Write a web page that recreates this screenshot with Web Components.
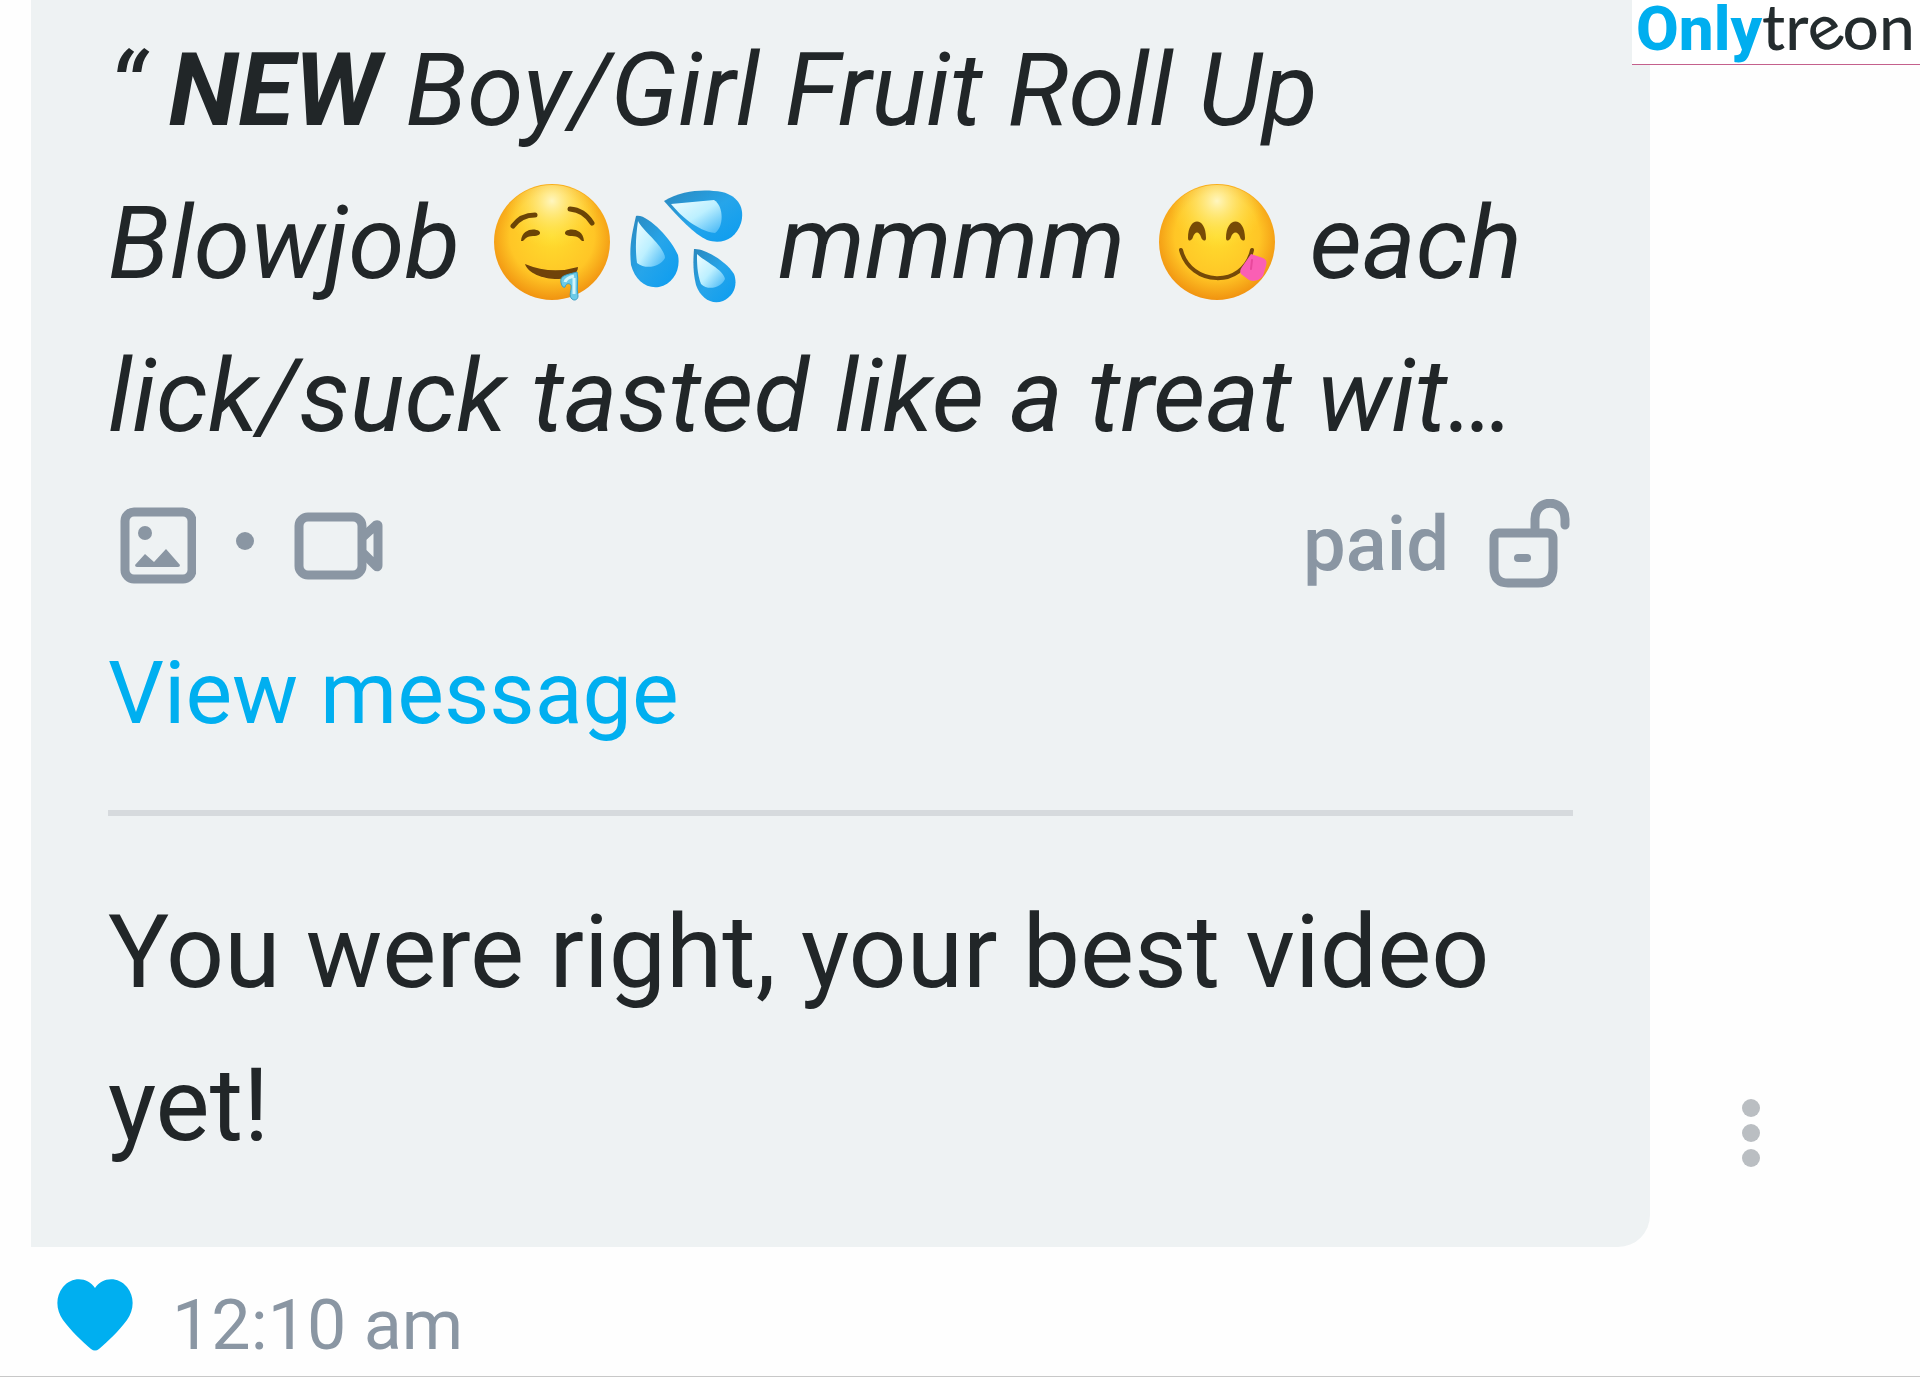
<!DOCTYPE html>
<html lang="en">
<head>
<meta charset="utf-8">
<title>Messages</title>
<style>
    body {
        margin: 0;
        background: #fefefe;
        color: #212628;
        font-family: Roboto, sans-serif;
    }
</style>
</head>
<body>
<chat-page>
    <brand-logo slot="brand"></brand-logo>
    <chat-message time="12:10 am">
        <quoted-post slot="quote" status="paid">“ <b>NEW</b> Boy/Girl Fruit Roll Up<br>
            Blowjob <emoji-icon name="drooling"></emoji-icon><emoji-icon name="drops"></emoji-icon> mmmm <emoji-icon name="yum"></emoji-icon> each<br>
            lick/suck tasted like a treat wit…</quoted-post>
        You were right, your best video yet!
    </chat-message>
</chat-page>

<script>
const EMOJI = {
    drooling: {
        label: 'drooling face',
        svg: `
            <circle cx="58" cy="58" r="58" fill="url(#face)"/>
            <circle cx="58" cy="58" r="57" fill="url(#shine)"/>
            <g fill="none" stroke="#6b4406" stroke-width="5" stroke-linecap="round">
                <path d="M19 42Q27 31 41 31"/>
                <path d="M76 25Q90 26 98 39"/>
            </g>
            <path d="M27 57C28 45 40 44 45 47C48 50 44 52 39 52C33 52 31 55 29 57Z" fill="#6b4406"/>
            <path d="M90 57C89 45 77 44 72 47C69 50 73 52 78 52C84 52 86 55 88 57Z" fill="#6b4406"/>
            <path d="M31 80Q57 91 84 83C84 90 76 95 64 95C48 95 34 89 31 80Z" fill="#70430a"/>
            <path d="M83 88C76 90 68 91 67 95C66 99 69 105 71 103C72 99 75 99 77 101C78 106 74 112 78 115C80 117 84 116 84 112C82 104 85 96 83 88Z" fill="#6ccbe8" stroke="#3a9fc5" stroke-width="1"/>
            <path d="M80 92Q72 94 71 98M80 94V110" fill="none" stroke="#d3f5fa" stroke-width="3"/>`
    },
    drops: {
        label: 'sweat droplets',
        svg: `
            <path d="M36 17C55 6 76 5 94 8C111 12 117 25 113 39C108 55 94 61 79 56C66 50 50 33 36 17Z" fill="url(#drop)"/>
            <path d="M8 32C4 50 1 62 3 81C7 96 18 105 31 103C45 100 53 86 50 71C44 56 19 29 8 32Z" fill="url(#drop)"/>
            <path d="M66 65C65 78 65 89 68 101C73 115 84 121 95 117C106 112 110 101 106 90C98 77 76 64 66 65Z" fill="url(#drop)"/>
            <path d="M43 20L86 16C96 22 96 43 87 49C69 47 52 31 43 20Z" fill="url(#glint)"/>
            <path d="M10 37C14 46 37 63 37 74C32 83 18 86 9 79C7 65 8 51 10 37Z" fill="url(#glint)"/>
            <path d="M69 70C76 77 96 86 97 95C93 104 80 107 73 100C69 89 69 79 69 70Z" fill="url(#glint)"/>`
    },
    yum: {
        label: 'face savoring food',
        svg: `
            <circle cx="58" cy="58" r="58" fill="url(#face)"/>
            <circle cx="58" cy="58" r="57" fill="url(#shine)"/>
            <path d="M29 54C29 32 47 32 47 54C47 58 43 57 42 53C40 47 36 47 34 53C33 57 29 58 29 54Z" fill="#774b06"/>
            <path d="M67 54C67 32 86 32 86 54C86 58 82 57 81 53C79 47 74 47 72 53C71 57 67 58 67 54Z" fill="#774b06"/>
            <path d="M22 66C31 102 84 105 93 66" fill="none" stroke="#754908" stroke-width="4" stroke-linecap="round"/>
            <path d="M92 70L104 74Q109 76 107 82L104 92Q98 99 90 96L82 90Q80 87 83 83Z" fill="#fa5fb4"/>
            <path d="M93 76L92 85" stroke="#e8489c" stroke-width="2" stroke-linecap="round"/>`
    }
};

class EmojiIcon extends HTMLElement {
    constructor() {
        super();
        this.attachShadow({ mode: 'open' });
    }

    connectedCallback() {
        const emoji = EMOJI[this.getAttribute('name')];
        this.shadowRoot.innerHTML = `
            <style>
                :host {
                    display: inline-block;
                    width: 116px;
                    height: 116px;
                    margin: 0 9px;
                    vertical-align: -22px;
                    line-height: 0;
                }
                svg {
                    width: 100%;
                    height: 100%;
                    overflow: visible;
                }
            </style>
            <svg viewBox="0 0 116 116" role="img" aria-label="${emoji.label}">
                <defs>
                    <radialGradient id="face" cx=".5" cy=".45" r=".56">
                        <stop offset="0" stop-color="#ffdc2e"/>
                        <stop offset=".65" stop-color="#ffc626"/>
                        <stop offset="1" stop-color="#f0900f"/>
                    </radialGradient>
                    <radialGradient id="shine" cx=".5" cy=".14" r=".42">
                        <stop offset="0" stop-color="#fffbd0" stop-opacity=".9"/>
                        <stop offset="1" stop-color="#ffe93c" stop-opacity="0"/>
                    </radialGradient>
                    <linearGradient id="drop" x1="0" y1="0" x2="1" y2="1">
                        <stop offset="0" stop-color="#2b88bd"/>
                        <stop offset=".5" stop-color="#26a5ea"/>
                        <stop offset="1" stop-color="#0b9cf0"/>
                    </linearGradient>
                    <linearGradient id="glint" x1="0" y1="0" x2="1" y2="1">
                        <stop offset="0" stop-color="#effdff"/>
                        <stop offset=".5" stop-color="#bdf0ff"/>
                        <stop offset="1" stop-color="#3fb4f5"/>
                    </linearGradient>
                </defs>
                ${emoji.svg}
            </svg>
        `;
    }
}

class BrandLogo extends HTMLElement {
    constructor() {
        super();
        this.attachShadow({ mode: 'open' });
    }

    connectedCallback() {
        this.shadowRoot.innerHTML = `
            <style>
                :host {
                    display: block;
                    box-sizing: border-box;
                    width: 288px;
                    height: 65px;
                    padding-left: 4px;
                    background: #fff;
                    border-bottom: 1px solid #c4608c;
                }
                a {
                    display: flex;
                    align-items: baseline;
                    color: #242c2e;
                    font: 500 64px/52px Lato, sans-serif;
                    text-decoration: none;
                    white-space: nowrap;
                }
                .only {
                    color: #00aeef;
                    font: 800 62px/52px Roboto, sans-serif;
                }
                .tilt {
                    display: inline-block;
                    transform: rotate(-30deg);
                    transform-origin: 50% 66%;
                }
            </style>
            <a href="#"><span class="only">Only</span><span>tr<span class="tilt">e</span>on</span></a>
        `;
    }
}

class QuotedPost extends HTMLElement {
    constructor() {
        super();
        this.attachShadow({ mode: 'open' });
    }

    connectedCallback() {
        const status = this.getAttribute('status') || '';
        this.shadowRoot.innerHTML = `
            <style>
                :host {
                    display: block;
                    border-bottom: 6px solid #d6dadd;
                    padding-bottom: 52px;
                }
                blockquote {
                    margin: 0;
                    font-size: 102px;
                    font-style: italic;
                    line-height: 153px;
                }
                .meta {
                    display: flex;
                    justify-content: space-between;
                    height: 90px;
                    margin: 26px 0 39px;
                    padding: 0 3px 0 12px;
                    color: #8a96a3;
                    font-size: 76px;
                    font-weight: 500;
                    line-height: 90px;
                }
                .media, .status {
                    display: flex;
                    align-items: center;
                    gap: 40px;
                }
                svg {
                    height: 90px;
                    fill: none;
                    stroke: currentColor;
                    stroke-width: 9;
                    stroke-linejoin: round;
                    stroke-linecap: round;
                }
                .solid {
                    fill: currentColor;
                    stroke: none;
                }
                a {
                    display: block;
                    color: #00aff0;
                    font-size: 88px;
                    line-height: 130px;
                    text-decoration: none;
                }
            </style>
            <blockquote><slot></slot></blockquote>
            <div class="meta">
                <div class="media">
                    <svg width="76" viewBox="0 0 76 90" role="img" aria-label="Photo">
                        <rect x="5" y="13" width="67" height="67" rx="9"/>
                        <circle class="solid" cx="25" cy="34" r="7"/>
                        <path class="solid" d="M15 66L25 55L34 63L46 50L60 66Q60 68 58 68H17Q15 68 15 66Z"/>
                    </svg>
                    <svg width="18" viewBox="0 0 18 90" aria-hidden="true">
                        <circle class="solid" cx="9" cy="42" r="9"/>
                    </svg>
                    <svg width="90" viewBox="0 0 90 90" role="img" aria-label="Video">
                        <rect x="5" y="18" width="63" height="58" rx="9"/>
                        <path d="M70 37L82 26Q84 25 84 27V66Q84 69 82 67L70 55"/>
                    </svg>
                </div>
                <div class="status">
                    <span>${status}</span>
                    <svg width="81" viewBox="0 0 81 90" role="img" aria-label="Unlocked">
                        <path d="M10 34H58Q64 34 64 40V69Q64 84 49 84H19Q5 84 5 69V40Q5 34 10 34Z"/>
                        <path d="M46 32V20C46 -1 76 -1 76 20V26"/>
                        <path stroke-width="8" d="M29 59H38"/>
                    </svg>
                </div>
            </div>
            <a href="#">View message</a>
        `;
    }
}

class ChatMessage extends HTMLElement {
    constructor() {
        super();
        this.attachShadow({ mode: 'open' });
    }

    connectedCallback() {
        const time = this.getAttribute('time') || '';
        this.shadowRoot.innerHTML = `
            <style>
                :host {
                    display: block;
                }
                .row {
                    display: flex;
                    align-items: flex-end;
                    padding-left: 31px;
                }
                .bubble {
                    flex: 1;
                    min-width: 0;
                    padding: 14px 77px 65px;
                    border-radius: 0 0 32px 0;
                    background: #eef2f3;
                }
                p {
                    margin: 60px 0 0;
                    font-size: 102px;
                    line-height: 153px;
                }
                button {
                    display: block;
                    padding: 0;
                    border: 0;
                    background: none;
                    color: inherit;
                }
                svg {
                    display: block;
                }
                .side {
                    flex: 0 0 270px;
                    box-sizing: border-box;
                    padding: 0 0 80px 92px;
                    color: #babec2;
                }
                footer {
                    display: flex;
                    align-items: flex-start;
                    gap: 39px;
                    padding: 32px 57px 5px;
                    color: #8a96a3;
                    font-size: 70px;
                    line-height: 92px;
                }
                .like {
                    color: #00aff0;
                }
            </style>
            <div class="row">
                <div class="bubble">
                    <slot name="quote"></slot>
                    <p><slot></slot></p>
                </div>
                <div class="side">
                    <button type="button" aria-label="More">
                        <svg width="18" height="68" viewBox="0 0 18 68" fill="currentColor">
                            <circle cx="9" cy="9" r="9"/>
                            <circle cx="9" cy="34" r="9"/>
                            <circle cx="9" cy="59" r="9"/>
                        </svg>
                    </button>
                </div>
            </div>
            <footer>
                <button type="button" class="like" aria-label="Like">
                    <svg width="76" height="72" viewBox="0 0 76 72" fill="currentColor">
                        <path d="M38 9C31 -2 15 -3 6 8C-2 18 -1 31 6 41C14 52 25 62 34 70Q38 73 42 70C51 62 62 52 70 41C77 31 78 18 70 8C61 -3 45 -2 38 9Z"/>
                    </svg>
                </button>
                <time>${time}</time>
            </footer>
        `;
    }
}

class ChatPage extends HTMLElement {
    constructor() {
        super();
        this.attachShadow({ mode: 'open' });
    }

    connectedCallback() {
        this.shadowRoot.innerHTML = `
            <style>
                :host {
                    display: block;
                    position: relative;
                    border-bottom: 1px solid #c8c8c8;
                }
                /* the logo floats over the conversation */
                slot[name="brand"]::slotted(*) {
                    position: absolute;
                    top: 0;
                    right: 0;
                }
            </style>
            <slot></slot>
            <slot name="brand"></slot>
        `;
    }
}

customElements.define('emoji-icon', EmojiIcon);
customElements.define('brand-logo', BrandLogo);
customElements.define('quoted-post', QuotedPost);
customElements.define('chat-message', ChatMessage);
customElements.define('chat-page', ChatPage);
</script>
</body>
</html>
